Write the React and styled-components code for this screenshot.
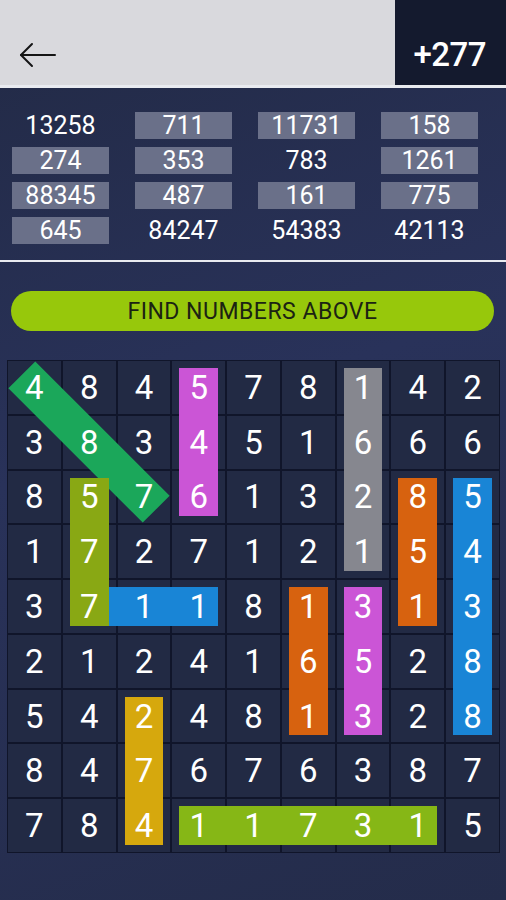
import React from 'react';
import styled, { createGlobalStyle } from 'styled-components';

const GlobalStyle = createGlobalStyle`
  html, body {
    margin: 0;
    padding: 0;
    background: #252d4a;
    font-family: Roboto, "Liberation Sans", sans-serif;
  }
`;

const words = [
  { n: '13258', found: false },
  { n: '711', found: true },
  { n: '11731', found: true },
  { n: '158', found: true },
  { n: '274', found: true },
  { n: '353', found: true },
  { n: '783', found: false },
  { n: '1261', found: true },
  { n: '88345', found: true },
  { n: '487', found: true },
  { n: '161', found: true },
  { n: '775', found: true },
  { n: '645', found: true },
  { n: '84247', found: false },
  { n: '54383', found: false },
  { n: '42113', found: false },
];

const grid = [
  '484578142',
  '383451666',
  '857613285',
  '172712154',
  '371181313',
  '212416528',
  '542481328',
  '847676387',
  '784117315',
];

// found words drawn over the board (row, col, length, direction)
const bars = [
  { r: 0, c: 3, len: 3, dir: 'v', color: '#cb55d6' },
  { r: 0, c: 6, len: 4, dir: 'v', color: '#86878f' },
  { r: 4, c: 1, len: 3, dir: 'h', color: '#1985d6' },
  { r: 2, c: 1, len: 3, dir: 'v', color: '#89a814' },
  { r: 2, c: 7, len: 3, dir: 'v', color: '#d7620f' },
  { r: 2, c: 8, len: 5, dir: 'v', color: '#1985d6' },
  { r: 4, c: 5, len: 3, dir: 'v', color: '#d7620f' },
  { r: 4, c: 6, len: 3, dir: 'v', color: '#cb55d6' },
  { r: 6, c: 2, len: 3, dir: 'v', color: '#d6a80d' },
  { r: 8, c: 3, len: 5, dir: 'h', color: '#86b716' },
];

const BOARD = 493;
const PITCH = BOARD / 9;
const INSET = 8;

const Screen = styled.div`
  width: 506px;
  min-height: 900px;
  background: linear-gradient(160deg, #222a45 0%, #29325a 45%, #242c4a 100%);
  overflow: hidden;
`;

const Header = styled.header`
  height: 85px;
  display: flex;
  border-bottom: 3px solid #e9ebf0;
`;

const BackArea = styled.div`
  flex: 1;
  background: #d9d9dd;
  display: flex;
  align-items: center;
  padding: 24px 0 0 18px;
`;

const Score = styled.div`
  width: 111px;
  background: #141a2e;
  color: #fff;
  font-size: 33px;
  font-weight: 500;
  letter-spacing: -0.5px;
  display: flex;
  align-items: center;
  justify-content: flex-end;
  padding: 24px 20px 0 0;
  box-sizing: border-box;
`;

const WordList = styled.section`
  display: grid;
  grid-template-columns: repeat(4, 97px);
  column-gap: 26px;
  row-gap: 8px;
  padding: 24px 12px 16px;
  border-bottom: 2px solid #e9ebf0;
`;

const Word = styled.div`
  height: 27px;
  display: flex;
  align-items: center;
  justify-content: center;
  color: #fff;
  font-size: 25px;
  background: ${p => (p.$found ? '#6a7089' : 'transparent')};
`;

const Prompt = styled.div`
  margin: 29px 12px 29px 11px;
  height: 40px;
  border-radius: 20px;
  background: #97c80b;
  color: #1b2313;
  font-size: 23px;
  letter-spacing: 0.5px;
  display: flex;
  align-items: center;
  justify-content: center;
`;

const Board = styled.div`
  position: relative;
  margin-left: 7px;
  width: ${BOARD}px;
  height: ${BOARD}px;
  box-sizing: border-box;
  padding: 1px;
  display: grid;
  grid-template-columns: repeat(9, 1fr);
  grid-template-rows: repeat(9, 1fr);
  gap: 2px;
  background: #10152a;
`;

const Cell = styled.div`
  background: #222a44;
  display: flex;
  align-items: center;
  justify-content: center;
`;

const Digit = styled.span`
  position: relative;
  z-index: 2;
  color: #fff;
  font-size: 33px;
`;

const Bar = styled.div`
  position: absolute;
  z-index: 1;
  background: ${p => p.$color};
  left: ${p => p.$c * PITCH + INSET}px;
  top: ${p => p.$r * PITCH + INSET}px;
  width: ${p => (p.$dir === 'h' ? p.$len : 1) * PITCH - INSET * 2}px;
  height: ${p => (p.$dir === 'v' ? p.$len : 1) * PITCH - INSET * 2}px;
`;

const Diagonal = styled.div`
  position: absolute;
  z-index: 1;
  background: #1ba75a;
  width: 190px;
  height: 38px;
  left: ${1.5 * PITCH - 95}px;
  top: ${1.5 * PITCH - 19}px;
  transform: rotate(45deg);
`;

const BackArrow = () => (
  <svg width="40" height="30" viewBox="0 0 40 30" fill="none" stroke="#151515" strokeWidth="2" strokeLinecap="round" strokeLinejoin="round">
    <path d="M3 15 H37" />
    <path d="M14 4 L3 15 L14 26" />
  </svg>
);

export default function App() {
  return (
    <Screen>
      <GlobalStyle />
      <Header>
        <BackArea>
          <BackArrow />
        </BackArea>
        <Score>+277</Score>
      </Header>

      <WordList>
        {words.map(w => (
          <Word key={w.n} $found={w.found}>{w.n}</Word>
        ))}
      </WordList>

      <Prompt>FIND NUMBERS ABOVE</Prompt>

      <Board>
        {grid.map((row, r) =>
          row.split('').map((d, c) => (
            <Cell key={r + '-' + c}>
              <Digit>{d}</Digit>
            </Cell>
          ))
        )}
        <Diagonal />
        {bars.map((b, i) => (
          <Bar key={i} $r={b.r} $c={b.c} $len={b.len} $dir={b.dir} $color={b.color} />
        ))}
      </Board>
    </Screen>
  );
}
